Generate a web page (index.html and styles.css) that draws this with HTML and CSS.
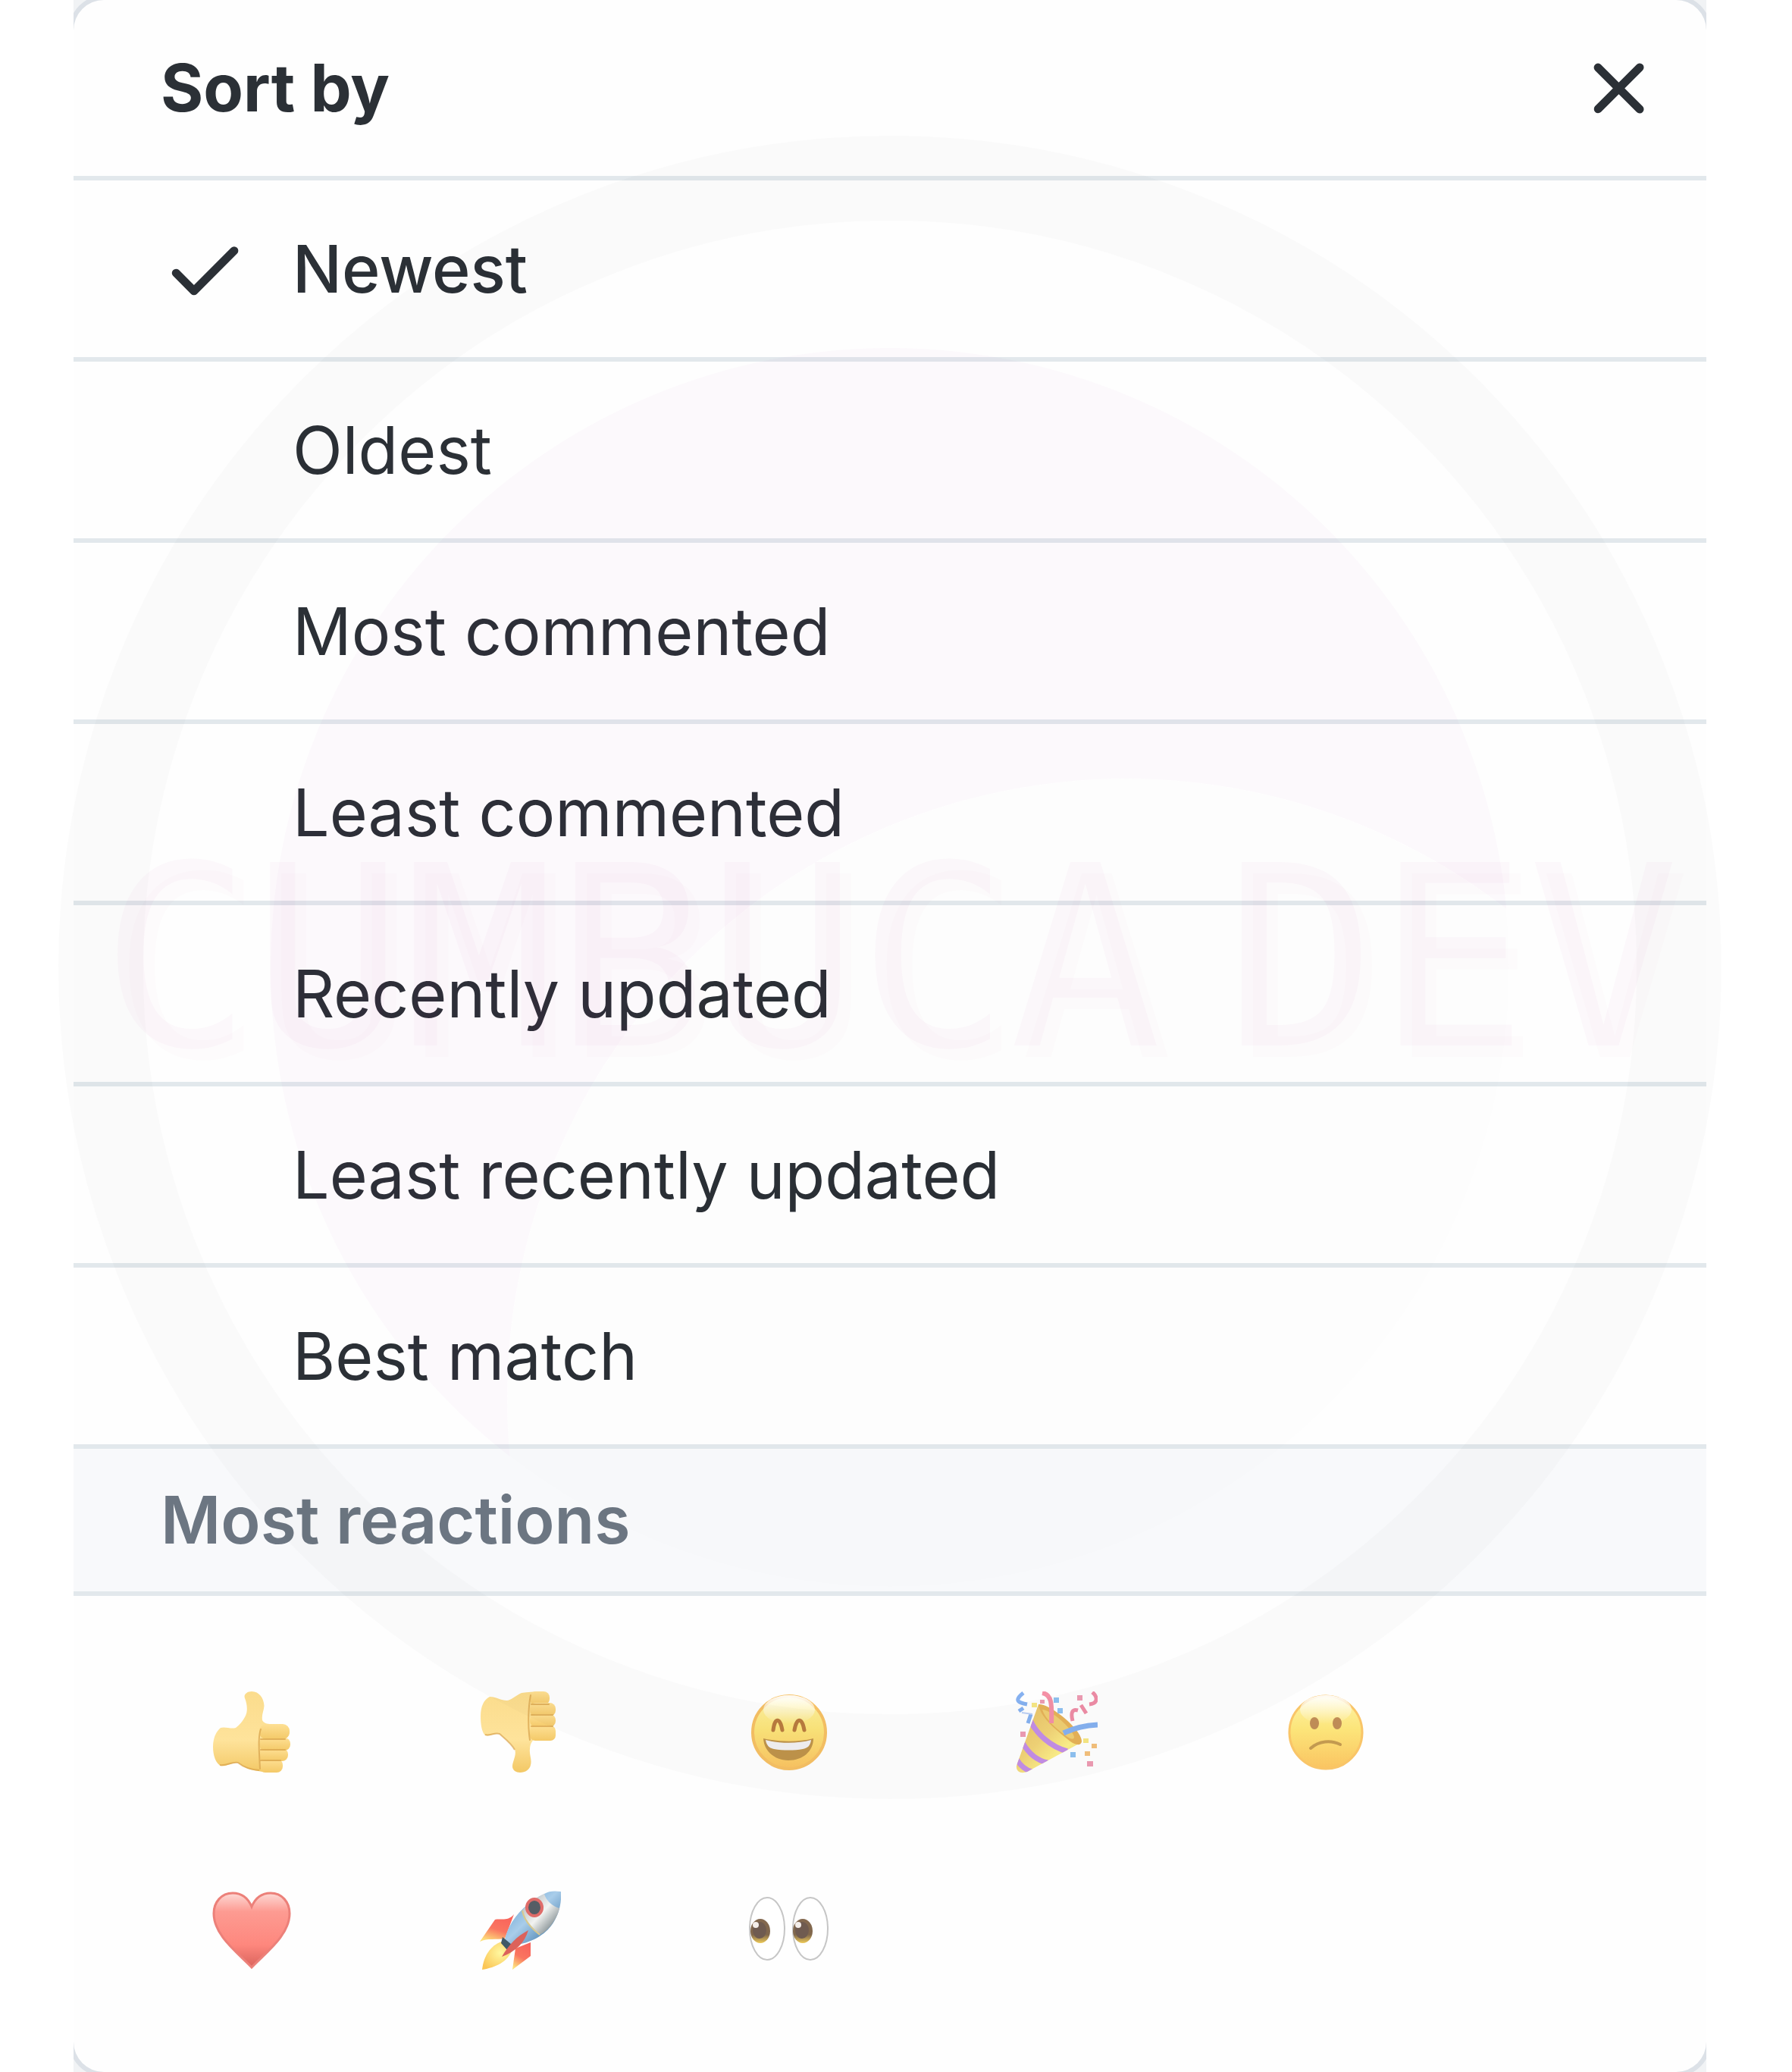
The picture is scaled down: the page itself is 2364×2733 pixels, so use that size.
FILE: index.html
```html
<!DOCTYPE html>
<html lang="en">
<head>
<meta charset="utf-8">
<meta name="viewport" content="width=device-width, initial-scale=1">
<title>Sort by</title>
<link rel="stylesheet" href="styles.css">
</head>
<body>
<main class="page">
  <div class="backdrop">
    <section class="panel" aria-labelledby="sort-title">
      <header class="panel-header">
        <h1 class="panel-title" id="sort-title">Sort by</h1>
        <button class="close" type="button" aria-label="Close menu">
          <svg class="icon" viewBox="0 0 16 16" aria-hidden="true"><path d="M3.72 3.72a.75.75 0 0 1 1.06 0L8 6.94l3.22-3.22a.75.75 0 1 1 1.06 1.06L9.06 8l3.22 3.22a.75.75 0 1 1-1.06 1.06L8 9.06l-3.22 3.22a.75.75 0 0 1-1.06-1.06L6.94 8 3.72 4.78a.75.75 0 0 1 0-1.06z"/></svg>
        </button>
      </header>
      <div class="options" role="menu" aria-labelledby="sort-title">
        <button class="option selected" type="button" role="menuitemradio" aria-checked="true">
          <svg class="icon check" viewBox="0 0 16 16" aria-hidden="true"><path d="M13.78 4.22a.75.75 0 0 1 0 1.06l-7.25 7.25a.75.75 0 0 1-1.06 0L2.22 9.28a.75.75 0 0 1 1.06-1.06L6 10.94l6.72-6.72a.75.75 0 0 1 1.06 0z"/></svg>
          <span>Newest</span>
        </button>
        <button class="option" type="button" role="menuitemradio" aria-checked="false"><span class="check"></span><span>Oldest</span></button>
        <button class="option" type="button" role="menuitemradio" aria-checked="false"><span class="check"></span><span>Most commented</span></button>
        <button class="option" type="button" role="menuitemradio" aria-checked="false"><span class="check"></span><span>Least commented</span></button>
        <button class="option" type="button" role="menuitemradio" aria-checked="false"><span class="check"></span><span>Recently updated</span></button>
        <button class="option" type="button" role="menuitemradio" aria-checked="false"><span class="check"></span><span>Least recently updated</span></button>
        <button class="option" type="button" role="menuitemradio" aria-checked="false"><span class="check"></span><span>Best match</span></button>
      </div>
      <h2 class="group-title">Most reactions</h2>
      <div class="reactions">
        <button class="reaction" type="button" aria-label="Thumbs up">
          <svg class="emoji" viewBox="0 0 108 108" aria-hidden="true">
            <defs>
              <linearGradient id="hand" x1="0" y1="0" x2="0" y2="1"><stop offset="0" stop-color="#fbdc8c"/><stop offset=".6" stop-color="#fee39b"/><stop offset="1" stop-color="#f3c865"/></linearGradient>
              <linearGradient id="finger" x1="0" y1="0" x2="0" y2="1"><stop offset="0" stop-color="#fee094"/><stop offset="1" stop-color="#f4c968"/></linearGradient>
            </defs>
            <path fill="url(#hand)" d="M54 0C48 0 43 4 45 9C48 16 49 26 46 32C42 40 38 44 33 48C27 50 19 46 13 48C6 54 3 63 3 73C3 85 7 95 13 98C20 100 28 93 36 94C41 98 46 101 52 103C62 105 72 107 81 107L80 43C74 43 70 42 68 38C67 30 70 26 70.500 19C70 9 64 0 54 0Z"/>
            <path fill="none" stroke="#d9a34c" stroke-width="2" stroke-opacity=".7" d="M12 97C20 99 28 92 36 94C42 99 52 103 64 104"/>
            <rect x="64" y="89" width="31" height="18" rx="8" fill="url(#finger)"/>
            <rect x="64" y="75" width="38" height="17" rx="8" fill="url(#finger)"/>
            <rect x="64" y="61" width="41" height="17" rx="8" fill="url(#finger)"/>
            <rect x="64" y="43" width="40" height="20" rx="9" fill="url(#finger)"/>
            <path fill="none" stroke="#dba751" stroke-width="2" stroke-linecap="round" stroke-opacity=".8" d="M66 63H98M66 77H98M66 91H92M66 50C62 60 64 80 65 102"/>
          </svg>
        </button>
        <button class="reaction" type="button" aria-label="Thumbs down">
          <svg class="emoji" viewBox="0 0 108 108" aria-hidden="true">
            <path fill="url(#hand)" d="M14 7C6 11 2 20 2 33C2 45 4 54 8 58C14 60 20 55 27 56C34 62 42 68 47 76C50 84 44 92 44 99C44 104 49 107 54 107C61 107 67 103 68 97C70 90 66 83 67 76C67 72 68 69 70 66L82 50V0C72 0 64 1 56 2C49 5 43 11 37 12C29 12 22 7 14 7Z"/>
            <path fill="none" stroke="#d9a34c" stroke-width="2" stroke-opacity=".7" d="M8 57C14 59 20 54 27 56C35 63 43 69 47 77"/>
            <rect x="67" y="0" width="26" height="18" rx="8" fill="url(#finger)"/>
            <rect x="67" y="15" width="34" height="18" rx="8" fill="url(#finger)"/>
            <rect x="67" y="30" width="34" height="17" rx="8" fill="url(#finger)"/>
            <rect x="67" y="45" width="34" height="20" rx="7" fill="url(#finger)"/>
            <path fill="none" stroke="#dba751" stroke-width="2" stroke-linecap="round" stroke-opacity=".8" d="M69 17H92M69 31H97M69 46H97M68 5C65 20 64 45 67 64"/>
          </svg>
        </button>
        <button class="reaction" type="button" aria-label="Laugh">
          <svg class="emoji" viewBox="0 0 108 108" aria-hidden="true">
            <defs>
              <linearGradient id="face" x1="0" y1="0" x2="0" y2="1"><stop offset="0" stop-color="#fef3a8"/><stop offset=".45" stop-color="#fce57a"/><stop offset="1" stop-color="#fac461"/></linearGradient>
              <linearGradient id="shine" x1="0" y1="0" x2="0" y2="1"><stop offset="0" stop-color="#fff" stop-opacity=".95"/><stop offset="1" stop-color="#fff" stop-opacity="0"/></linearGradient>
            </defs>
            <circle cx="55" cy="54" r="48" fill="url(#face)" stroke="#f6c164" stroke-width="4"/>
            <ellipse cx="55" cy="24" rx="34" ry="19" fill="url(#shine)"/>
            <path fill="none" stroke="#b97b3f" stroke-width="5" stroke-linecap="round" d="M34 51C36 34 43 34 46 51M62 51C65 34 72 34 75 51"/>
            <path fill="#bf944b" d="M21 62C42 67 68 67 87 62C87 79 73 91 54 91C36 91 22 79 21 62Z"/>
            <path fill="#f1f0f2" d="M24 64C43 69 66 69 84 64C83 72 79 75 73 76C62 78 47 78 35 76C29 75 25 71 24 64Z"/>
          </svg>
        </button>
        <button class="reaction" type="button" aria-label="Hooray">
          <svg class="emoji" viewBox="0 0 108 108" aria-hidden="true">
            <defs>
              <linearGradient id="cone" x1="0" y1="0" x2="1" y2="1"><stop offset="0" stop-color="#e3b95f"/><stop offset=".45" stop-color="#f1d477"/><stop offset=".65" stop-color="#fcf08a"/><stop offset="1" stop-color="#dfb75c"/></linearGradient>
              <clipPath id="cone-shape"><path d="M30 17C47 20 82 50 87 67L15 106C7 109 0 106 1 98Z"/></clipPath>
            </defs>
            <g clip-path="url(#cone-shape)">
              <path fill="url(#cone)" d="M0 0H108V108H0Z"/>
              <path fill="none" stroke="#c48ee6" stroke-width="7" d="M19 38C27 56 46 73 68 79M9 68C16 80 27 91 42 94M0 88C6 98 12 104 22 106"/>
            </g>
            <path fill="#e6b258" d="M30 17C44 15 87 50 87 66C86 72 79 71 72 66C52 50 32 34 30 17Z"/>
            <path fill="#efcf72" d="M35 24C46 24 74 48 77 60C77 65 70 62 64 57C50 46 39 36 35 24Z"/>
            <path fill="none" stroke="#f491a6" stroke-width="6" d="M35 2C47 4 48 15 47 42"/>
            <path fill="none" stroke="#86b1f0" stroke-width="7" d="M63 55C77 48 90 45 108 44"/>
            <path fill="none" stroke="#86b1f0" stroke-width="5" d="M10 2C-4 13 5 15 15 17M4 26L10 22M20 30L16 42"/>
            <path fill="none" stroke="#bcd0f4" stroke-width="2" d="M8 28L22 30"/>
            <path fill="none" stroke="#ee8da6" stroke-width="5" d="M101 1C108 7 109 16 97 17M86 18L93 29M75 39C72 27 75 23 82 25"/>
            <path fill="#8fc2f1" d="M50 8h7v7h-7zM55 22h7v7h-7zM72 80h7v7h-7z"/>
            <path fill="#ed9cb3" d="M81 5h7v7h-7zM6 53h7v7h-7zM94 92h8v7h-8zM32 11h6v5h-6z"/>
            <path fill="#f3c07c" d="M100 69h7v6h-7zM91 79h7v6h-7z"/>
            <path fill="#f6e784" d="M21 15h7v6h-7zM89 62h7v6h-7z"/>
          </svg>
        </button>
        <button class="reaction" type="button" aria-label="Confused">
          <svg class="emoji" viewBox="0 0 108 108" aria-hidden="true">
            <circle cx="55" cy="54" r="48" fill="url(#face)" stroke="#f9c568" stroke-width="3"/>
            <ellipse cx="55" cy="24" rx="34" ry="19" fill="url(#shine)"/>
            <ellipse cx="40" cy="42" rx="6" ry="8" fill="#bf8c56"/>
            <ellipse cx="70" cy="42" rx="6" ry="8" fill="#bf8c56"/>
            <path fill="none" stroke="#c39a50" stroke-width="4" stroke-linecap="round" d="M35 75C46 65 62 64 74 70"/>
          </svg>
        </button>
        <button class="reaction" type="button" aria-label="Heart">
          <svg class="emoji" viewBox="0 0 108 108" aria-hidden="true">
            <defs>
              <linearGradient id="heart" x1="0" y1="0" x2="0" y2="1"><stop offset="0" stop-color="#fdd9d5"/><stop offset=".25" stop-color="#fd9b92"/><stop offset=".7" stop-color="#fe877d"/><stop offset="1" stop-color="#d9635c"/></linearGradient>
            </defs>
            <path fill="url(#heart)" stroke="#ec8079" stroke-width="3" d="M54 23C49 11 40 5 29 5C14 5 4 17 4 32C4 61 36 84 54 103C72 84 104 61 104 32C104 17 94 5 79 5C68 5 59 11 54 23Z"/>
          </svg>
        </button>
        <button class="reaction" type="button" aria-label="Rocket">
          <svg class="emoji" viewBox="0 0 108 108" aria-hidden="true">
            <defs>
              <linearGradient id="fin" x1=".7" y1="0" x2=".3" y2="1"><stop offset="0" stop-color="#f8625b"/><stop offset=".55" stop-color="#fa7560"/><stop offset="1" stop-color="#fde17b"/></linearGradient>
              <linearGradient id="body" x1=".2" y1=".2" x2=".8" y2=".8"><stop offset="0" stop-color="#c3c9cc"/><stop offset=".5" stop-color="#f2f3f1"/><stop offset="1" stop-color="#8e989b"/></linearGradient>
              <linearGradient id="steel" x1=".2" y1=".2" x2=".8" y2=".8"><stop offset="0" stop-color="#79aed8"/><stop offset=".45" stop-color="#a9cdea"/><stop offset="1" stop-color="#568bb7"/></linearGradient>
              <radialGradient id="flame" cx=".6" cy=".4" r=".7"><stop offset="0" stop-color="#fff8a0"/><stop offset="1" stop-color="#fbc555"/></radialGradient>
            </defs>
            <path fill="url(#fin)" d="M1 69L21 40C28 38 38 43 46 33L34 65C23 67 11 64 1 69Z"/>
            <path fill="url(#fin)" d="M68 70V88L44 106L48 78Z"/>
            <path fill="url(#flame)" d="M30 69C15 74 6 88 4 106C22 103 38 96 44 79Z"/>
            <path fill="url(#steel)" d="M108 3C100 2 92 2 86 6C61 18 40 40 34 66L40 74C67 73 88 60 98 44C106 31 109 17 108 3Z"/>
            <path fill="url(#body)" d="M86 6C76 10 66 18 57 28C59 39 67 50 80 60C90 55 95 48 100 40C104 33 105 29 106 25C98 23 88 15 86 6Z"/>
            <path fill="none" stroke="#d8c98d" stroke-width="2" d="M57 28C59 39 67 50 80 60"/>
            <ellipse cx="73" cy="24" rx="10" ry="11" fill="#555d65" stroke="#df6c69" stroke-width="4"/>
            <path fill="#3f5967" d="M31 63L43 73L37 80L29 71Z"/>
            <path fill="#dc625b" d="M65 54C60 71 48 82 30 89C39 73 50 62 65 54Z"/>
          </svg>
        </button>
        <button class="reaction" type="button" aria-label="Eyes">
          <svg class="emoji" viewBox="0 0 108 108" aria-hidden="true">
            <defs>
              <linearGradient id="iris" x1="0" y1="0" x2="0" y2="1"><stop offset="0" stop-color="#83684f"/><stop offset=".65" stop-color="#80674c"/><stop offset="1" stop-color="#efcb58"/></linearGradient>
            </defs>
            <g fill="#fff" stroke="#c6c6c6" stroke-width="2"><ellipse cx="26" cy="52" rx="23" ry="41"/><ellipse cx="83" cy="52" rx="23" ry="41"/></g>
            <g fill="url(#iris)"><ellipse cx="17" cy="55" rx="13" ry="16"/><ellipse cx="73" cy="55" rx="13" ry="16"/></g>
            <g fill="#6f5b50"><ellipse cx="16" cy="54" rx="9" ry="11"/><ellipse cx="72" cy="54" rx="9" ry="11"/></g>
            <g fill="#f4eeea"><circle cx="11" cy="47" r="4"/><circle cx="67" cy="47" r="4"/></g>
          </svg>
        </button>
      </div>
    </section>
  </div>

  <div class="watermark">
    <svg class="watermark-logo" viewBox="0 0 2194 2194" aria-hidden="true">
      <defs>
        <clipPath id="disc"><circle cx="1097" cy="1097" r="817"/></clipPath>
        <mask id="outside-hill"><path fill="#fff" d="M0 0H2194V2194H0Z"/><circle cx="1409" cy="1665" r="817" fill="#000"/></mask>
      </defs>
      <circle class="ring" cx="1097" cy="1097" r="1041"/>
      <circle class="sky" cx="1097" cy="1097" r="817" mask="url(#outside-hill)"/>
      <circle class="hill" cx="1409" cy="1665" r="817" clip-path="url(#disc)"/>
    </svg>
    <p class="watermark-text"><span>CUMBUCA</span><span>DEV</span></p>
  </div>
</main>
</body>
</html>
```
FILE: styles.css
```css
* {
  box-sizing: border-box;
}

body {
  margin: 0;
  background: #fff;
  color: #2b3036;
  font-family: Inter, "Liberation Sans", sans-serif;
  font-size: 86px;
  line-height: 104px;
}

.page {
  position: relative;
  min-height: 100vh;
  padding: 0 113px 0 97px;
  overflow: hidden;
}

.backdrop {
  overflow: hidden;
  background: #f1f3f5;
}

.panel {
  min-height: 100vh;
  border-radius: 40px;
  background: #fefefe;
  box-shadow: 0 0 0 6px #dce1e7;
}

.panel-header {
  display: flex;
  align-items: center;
  justify-content: space-between;
  height: 238px;
  padding: 0 57px 0 115px;
  border-bottom: 6px solid #e2e8ec;
}

.panel-title,
.group-title {
  margin: 0;
  font-size: inherit;
  font-weight: 600;
}

.panel-title {
  font-weight: 700;
}

button {
  margin: 0;
  padding: 0;
  border: 0;
  background: none;
  color: inherit;
  font: inherit;
  text-align: left;
  cursor: pointer;
}

.icon {
  display: block;
  width: 117px;
  height: 117px;
  fill: currentColor;
}

.options {
  display: flex;
  flex-direction: column;
}

.option {
  display: flex;
  align-items: center;
  gap: 57px;
  height: 239px;
  padding: 0 115px;
  border-bottom: 6px solid #e2e8ec;
}

.option.selected {
  font-weight: 500;
}

.check {
  flex: none;
  width: 117px;
}

.group-title {
  display: flex;
  align-items: center;
  height: 194px;
  padding: 0 115px;
  border-bottom: 6px solid #e2e8ec;
  background: #f8f9fb;
  color: #6c7682;
}

.reactions {
  display: flex;
  flex-wrap: wrap;
  padding: 49px 58px;
}

.reaction {
  display: flex;
  align-items: center;
  justify-content: center;
  width: 354px;
  height: 261px;
}

.emoji {
  width: 108px;
  height: 108px;
}

/* The brand mark is laid over the whole panel and lets clicks through. */
.watermark {
  position: absolute;
  inset: 0;
  display: grid;
  place-items: center;
  padding: 0 93px 181px 77px;
  pointer-events: none;
}

.watermark-logo,
.watermark-text {
  grid-area: 1 / 1;
}

.watermark-logo {
  display: block;
  width: 100%;
}

.ring {
  fill: none;
  stroke: #000;
  stroke-width: 112;
  stroke-opacity: 0.016;
}

.sky {
  fill: #962eb4;
  fill-opacity: 0.024;
}

.hill {
  fill: #000;
  fill-opacity: 0.005;
}

.watermark-text {
  display: flex;
  gap: 84px;
  margin: 0;
  padding-bottom: 24px;
  color: rgba(200, 20, 150, 0.026);
  font-family: "DejaVu Sans Mono", monospace;
  font-size: 332px;
  line-height: 386px;
  text-shadow: 15px 15px rgba(200, 20, 120, 0.01);
}
```
